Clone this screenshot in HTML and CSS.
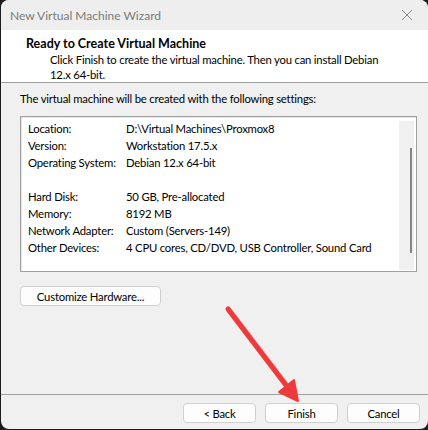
FILE: index.html
```html
<!DOCTYPE html>
<html>
  <head>
    <meta charset="UTF-8" />
    <title>New Virtual Machine Wizard</title>
    <link rel="stylesheet" href="styles.css">
  </head>
  <body>
    <div class="window">
      <div class="titlebar">
        <span class="title">New Virtual Machine Wizard</span>
        <svg class="close" width="12" height="12" viewBox="0 0 12 12">
          <path d="M1 1 L11 11 M11 1 L1 11" stroke="#8a8a8a" stroke-width="1" fill="none" />
        </svg>
      </div>
      <div class="header">
        <h2>Ready to Create Virtual Machine</h2>
        <p>Click Finish to create the virtual machine. Then you can install Debian 12.x 64-bit.</p>
      </div>
      <div class="content">
        <p class="intro">The virtual machine will be created with the following settings:</p>
        <div class="summary">
          <div class="rows">
            <div class="row"><span>Location:</span><span>D:\Virtual Machines\Proxmox8</span></div>
            <div class="row"><span>Version:</span><span>Workstation 17.5.x</span></div>
            <div class="row"><span>Operating System:</span><span>Debian 12.x 64-bit</span></div>
            <div class="row blank"></div>
            <div class="row"><span>Hard Disk:</span><span>50 GB, Pre-allocated</span></div>
            <div class="row"><span>Memory:</span><span>8192 MB</span></div>
            <div class="row"><span>Network Adapter:</span><span>Custom (Servers-149)</span></div>
            <div class="row"><span>Other Devices:</span><span>4 CPU cores, CD/DVD, USB Controller, Sound Card</span></div>
          </div>
          <div class="scroll"><div class="thumb"></div></div>
        </div>
        <button class="btn custom">Customize Hardware...</button>
      </div>
      <div class="footer">
        <button class="btn">&lt; Back</button>
        <button class="btn">Finish</button>
        <button class="btn">Cancel</button>
      </div>

      <svg class="arrow" width="428" height="430" viewBox="0 0 428 430">
        <path d="M229 310 L294 395" stroke="#a02020" stroke-opacity="0.25" stroke-width="6" stroke-linecap="round" fill="none" />
        <path d="M228 309 L292 393" stroke="#ee3a3a" stroke-width="5" stroke-linecap="round" fill="none" />
        <path d="M298 401 L279 392 L294 380 Z" fill="#ee3a3a" stroke="#ee3a3a" stroke-width="2" stroke-linejoin="round" />
      </svg>
    </div>
  </body>
</html>
```

FILE: styles.css
```css
* {
  box-sizing: border-box;
}
body {
  margin: 0;
  background: #1c1c1c;
  font-family: Lato, "Noto Sans", sans-serif;
  font-size: 11.3px;
  letter-spacing: -0.2px;
  color: #000;
}
.window {
  position: relative;
  width: 427px;
  height: 429px;
  margin-left: 1px;
  background: #f0f0f0;
  border-radius: 8px;
  overflow: hidden;
  display: flex;
  flex-direction: column;
}
.titlebar {
  height: 30px;
  background: #eeeeee;
  display: flex;
  align-items: center;
  justify-content: space-between;
  padding: 0 15px 0 9px;
}
.title {
  color: #7a7a7a;
  font-size: 12px;
  letter-spacing: 0;
}
.header {
  background: #fff;
  height: 53px;
  border-bottom: 1px solid #a0a0a0;
  padding: 6px 20px 0 25px;
}
.header h2 {
  margin: 0;
  font-size: 12.5px;
  letter-spacing: 0;
  font-weight: bold;
  line-height: 16px;
}
.header p {
  margin: 0 0 0 24px;
  line-height: 15px;
  width: 335px;
}
.content {
  flex: 1;
  padding: 8px 11px 0 19px;
}
.intro {
  margin: 0 0 10px;
  line-height: 15px;
}
.summary {
  height: 156px;
  border: 1px solid #a0a0a0;
  background: #fff;
  display: flex;
  box-shadow: inset 1px 1px 0 #e6e6e6;
}
.rows {
  flex: 1;
  padding: 3px 0 0 7px;
  white-space: nowrap;
}
.row {
  display: flex;
  height: 17px;
  line-height: 17px;
}
.row span:first-child {
  width: 98px;
  flex: none;
}
.scroll {
  width: 15px;
  margin: 4px 2px 1px 0;
  background: #f0f0f0;
  display: flex;
  justify-content: flex-end;
  padding: 27px 2px 0 0;
}
.thumb {
  width: 2px;
  height: 105px;
  background: #858585;
}
.btn {
  font-family: inherit;
  font-size: 11.3px;
  letter-spacing: -0.2px;
  color: #000;
  background: #fdfdfd;
  border: 1px solid #d0d0d0;
  border-radius: 4px;
  height: 20px;
  padding: 0;
}
.custom {
  margin-top: 14px;
  width: 141px;
}
.footer {
  height: 35px;
  border-top: 1px solid #a0a0a0;
  display: flex;
  justify-content: flex-end;
  gap: 9px;
  padding: 8px 8px 0 0;
}
.footer .btn {
  width: 73px;
}
.arrow {
  position: absolute;
  left: -1px;
  top: 0;
}
```
